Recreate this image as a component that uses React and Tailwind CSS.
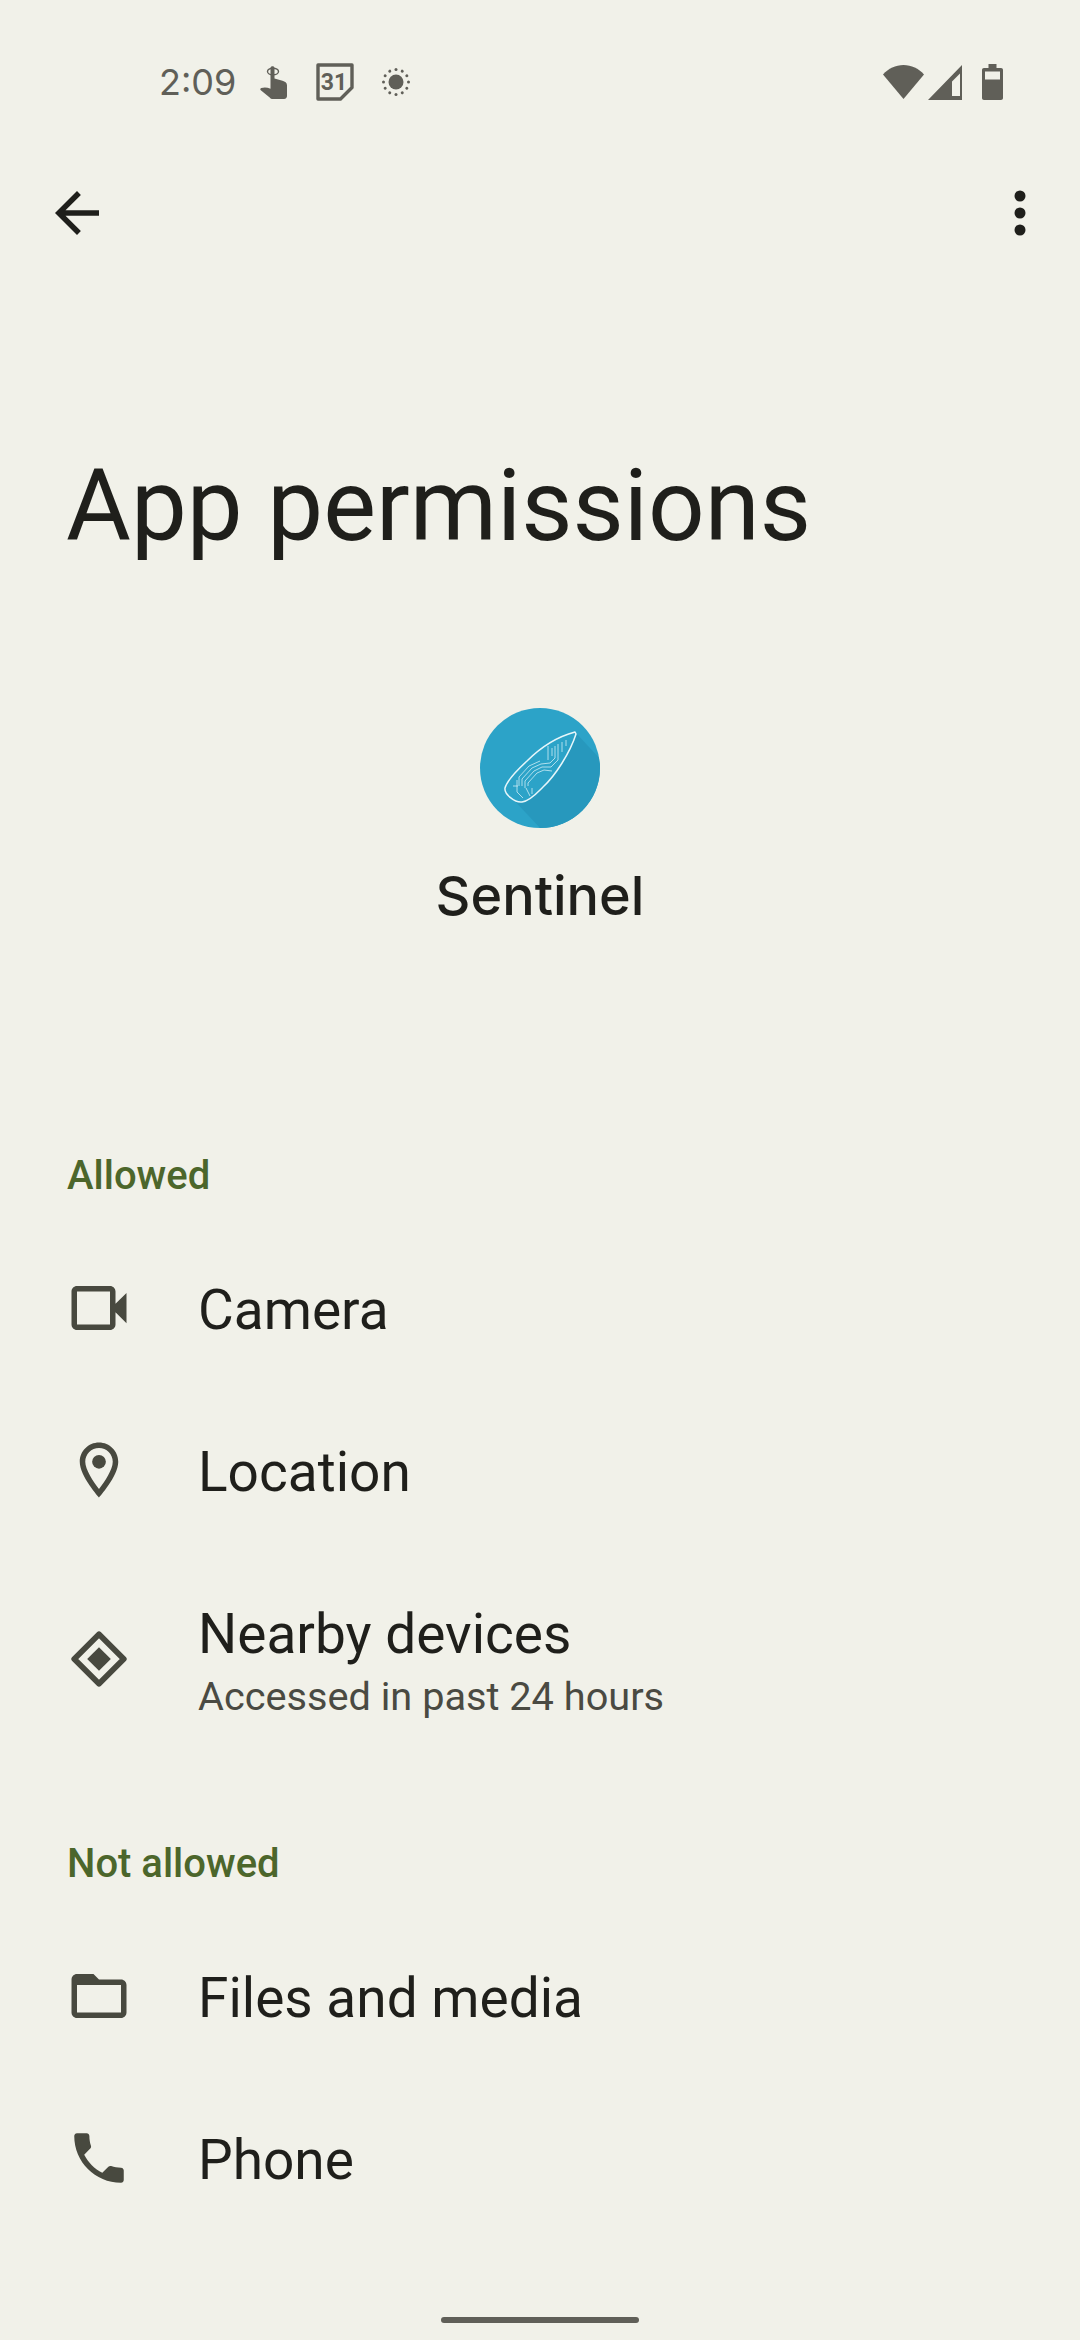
import React from 'react';

const Icon = ({ children, className = 'w-[66px] h-[66px]', fill = '#48493f' }) => (
  <svg viewBox="0 0 24 24" className={`${className} shrink-0`} fill={fill}>
    {children}
  </svg>
);

const CameraIcon = () => (
  <Icon>
    <path d="M18 10.480V6c0-1.100-.9-2-2-2H4c-1.100 0-2 .9-2 2v12c0 1.100.9 2 2 2h12c1.100 0 2-.9 2-2v-4.480l4 3.980v-11l-4 3.980zm-2-4.480v12H4V6h12z" />
  </Icon>
);

const LocationIcon = () => (
  <Icon>
    <path d="M12 2C8.130 2 5 5.130 5 9c0 5.250 7 13 7 13s7-7.750 7-13c0-3.870-3.130-7-7-7zM7 9c0-2.760 2.240-5 5-5s5 2.240 5 5c0 2.880-2.880 7.190-5 9.880C9.920 16.210 7 11.850 7 9z" />
    <circle cx="12" cy="9" r="2.500" />
  </Icon>
);

const NearbyIcon = () => (
  <Icon>
    <path d="M12 3l9 9-9 9-9-9z" fill="none" stroke="#48493f" strokeWidth="2.100" strokeLinejoin="round" />
    <path d="M12 7.700l4.300 4.300-4.300 4.300-4.300-4.300z" />
  </Icon>
);

const FolderIcon = () => (
  <Icon>
    <path d="M20 6h-8l-2-2H4c-1.100 0-1.990.9-1.990 2L2 18c0 1.100.9 2 2 2h16c1.100 0 2-.9 2-2V8c0-1.100-.9-2-2-2zm0 12H4V8h16v10z" />
  </Icon>
);

const PhoneIcon = () => (
  <Icon>
    <path d="M6.620 10.790c1.440 2.830 3.760 5.140 6.590 6.590l2.200-2.200c.27-.27.67-.36 1.020-.24 1.120.37 2.330.57 3.570.57.55 0 1 .45 1 1V20c0 .55-.45 1-1 1-9.390 0-17-7.610-17-17 0-.55.45-1 1-1h3.500c.55 0 1 .45 1 1 0 1.250.2 2.450.57 3.570.11.35.03.74-.25 1.020l-2.200 2.200z" />
  </Icon>
);

const sunDots = [0, 30, 60, 90, 120, 150, 180, 210, 240, 270, 300, 330];

const StatusBar = () => (
  <div className="h-[164px] flex items-center pl-[159px] pr-[77px] text-[#605f58]">
    <span className="font-['Inter',sans-serif] text-[36px] leading-none w-[101px]">2:09</span>
    <svg viewBox="0 0 28 34" className="w-[28px] h-[34px] mr-[28px]" fill="#605f58">
      <ellipse cx="13" cy="6.500" rx="5.500" ry="3.300" fill="none" stroke="#605f58" strokeWidth="1.400" />
      <path d="M10.500 3c0-2.400 4-2.400 4 0v10.500l8 2.200c2.400.7 4.500 2 4.500 4.500V31c0 1.500-1 3-3 3H13c-1.500 0-2.500-.6-3.300-1.600L.8 25.200c-.9-.8-.6-1.600.5-2.100 3-1 6-.6 9.200.6z" />
    </svg>
    <svg viewBox="0 0 38 38" className="w-[38px] h-[38px] mr-[28px]">
      <path d="M2 2h34v22.500L24.500 36H2z" fill="none" stroke="#605f58" strokeWidth="3.400" strokeLinejoin="round" />
      <text x="18" y="26.500" textAnchor="middle" fontFamily="Roboto, sans-serif" fontWeight="700" fontSize="23" fill="#605f58">31</text>
    </svg>
    <svg viewBox="0 0 28 28" className="w-[28px] h-[28px]" fill="#605f58">
      <circle cx="14" cy="14" r="7.500" />
      {sunDots.map((a) => (
        <circle key={a} cx="14" cy="1.500" r="1.500" transform={`rotate(${a} 14 14)`} />
      ))}
    </svg>
    <div className="flex-1" />
    <svg viewBox="0 0 41 34" className="w-[41px] h-[34px] mr-[4px]" fill="#605f58">
      <path d="M20.500 34L0 9.500C5.500 3.500 12.500 0 20.500 0S35.500 3.500 41 9.500z" />
    </svg>
    <svg viewBox="0 0 34 35" className="w-[34px] h-[35px] mr-[20px]" fill="#605f58">
      <path d="M34 0v35H0zM32 8.500l-8 8v14.500h8z" fillRule="evenodd" />
    </svg>
    <svg viewBox="0 0 21 36" className="w-[21px] h-[36px]" fill="#605f58">
      <path d="M6.500 0h8v4H19c1.200 0 2 .8 2 2v28c0 1.200-.8 2-2 2H2c-1.200 0-2-.8-2-2V6c0-1.200.8-2 2-2h4.500z" />
      <rect x="3" y="7.500" width="15" height="8" fill="#f1f1e9" />
    </svg>
  </div>
);

const Toolbar = () => (
  <div className="h-[98px] flex items-center justify-between pl-[44px] pr-[54px]">
    <Icon fill="#1f1f1b">
      <path d="M20 11H7.830l5.590-5.590L12 4l-8 8 8 8 1.410-1.410L7.830 13H20v-2z" />
    </Icon>
    <svg viewBox="0 0 12 46" className="w-[12px] h-[46px]" fill="#1f1f1b">
      <circle cx="6" cy="6" r="5.500" />
      <circle cx="6" cy="23" r="5.500" />
      <circle cx="6" cy="40" r="5.500" />
    </svg>
  </div>
);

const AppLogo = () => (
  <svg viewBox="0 0 120 120" className="w-[120px] h-[120px]">
    <defs>
      <clipPath id="disc">
        <circle cx="60" cy="60" r="60" />
      </clipPath>
    </defs>
    <circle cx="60" cy="60" r="60" fill="#2ca3c8" />
    <path d="M95 24L122 53V122H62L30 88z" fill="#2798bd" clipPath="url(#disc)" />
    <path d="M95 24C80 28 65 35 47 53C35 64 27 73 25 80C24 86 35 95 42 94C50 93 58 84 63 79C75 68 90 45 96 26z" fill="#2ca3c8" stroke="#e6f6fa" strokeWidth="1.500" strokeLinejoin="round" />
    <g fill="none" stroke="#cfeef5" strokeWidth="0.800">
      <path d="M39 78V69L49 58 60 53" />
      <path d="M42 78V71L52 60 61 56 70 55 75 50V38" />
      <path d="M45 80V73L54 63 62 59 71 59 78 52V36" />
      <path d="M48 78V75L57 65 64 62 72 63" />
      <path d="M68 38V52M72 40V48M82 34V44M86 32V38" />
      <path d="M37 72V84L43 90M33 78H38M52 80V86M46 80L50 88" />
    </g>
  </svg>
);

const SectionLabel = ({ children, className = '' }) => (
  <div className={`pl-[67px] text-[40px] leading-[52px] font-medium text-[#4c662b] ${className}`}>
    {children}
  </div>
);

const PermissionRow = ({ icon, title, summary }) => (
  <div className={`flex items-center pl-[66px] ${summary ? 'h-[212px]' : 'h-[162px]'}`}>
    <div className={summary ? '' : 'mb-[5px]'}>{icon}</div>
    <div className={`ml-[66px] ${summary ? 'pt-[4px]' : ''}`}>
      <div className="text-[55px] leading-[66px] text-[#1f1f1b]">{title}</div>
      {summary && <div className="text-[39.700px] leading-[50px] text-[#4a4a42] mt-[5px]">{summary}</div>}
    </div>
  </div>
);

export default function App() {
  return (
    <div className="w-[1080px] h-[2340px] overflow-hidden bg-[#f1f1e9] flex flex-col font-['Roboto',sans-serif]">
      <StatusBar />
      <Toolbar />
      <h1 className="mt-[184px] pl-[66px] text-[99.500px] leading-[120px] font-normal text-[#1f1f1b]">App permissions</h1>
      <div className="mt-[142px] flex flex-col items-center">
        <AppLogo />
        <div className="mt-[32px] font-['Inter',sans-serif] text-[54px] leading-[72px] font-medium text-[#1f1f1b]">Sentinel</div>
      </div>
      <SectionLabel className="mt-[218px]">Allowed</SectionLabel>
      <div className="mt-[27px]">
        <PermissionRow icon={<CameraIcon />} title="Camera" />
        <PermissionRow icon={<LocationIcon />} title="Location" />
        <PermissionRow icon={<NearbyIcon />} title="Nearby devices" summary="Accessed in past 24 hours" />
      </div>
      <SectionLabel className="mt-[73px]">Not allowed</SectionLabel>
      <div className="mt-[27px]">
        <PermissionRow icon={<FolderIcon />} title="Files and media" />
        <PermissionRow icon={<PhoneIcon />} title="Phone" />
      </div>
      <div className="flex-1 flex items-end justify-center pb-[17px]">
        <div className="w-[198px] h-[6px] rounded-full bg-[#605f58]" />
      </div>
    </div>
  );
}
